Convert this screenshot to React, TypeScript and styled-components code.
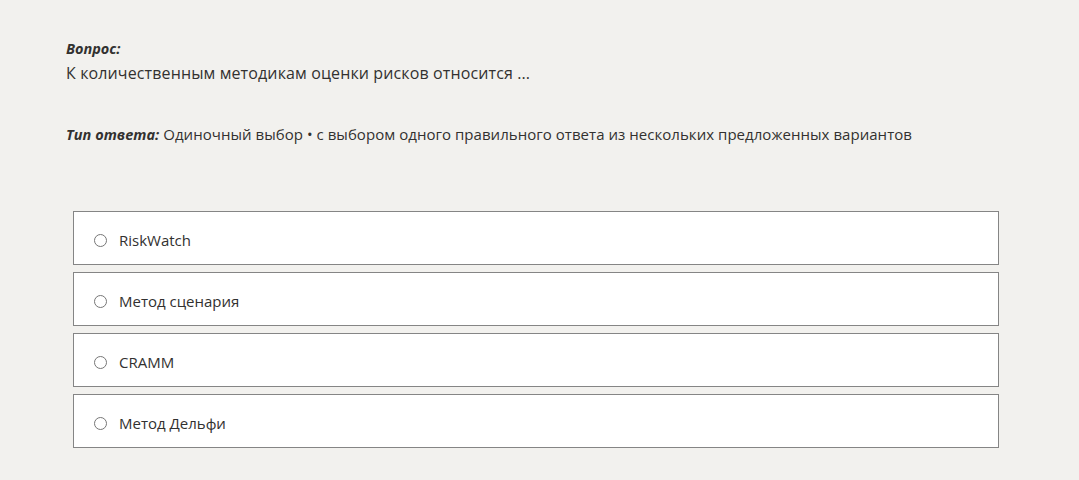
import React from 'react';
import styled, { createGlobalStyle } from 'styled-components';

const GlobalStyle = createGlobalStyle`
  html, body {
    margin: 0;
    padding: 0;
    background-color: #f2f1ee;
  }
  body {
    font-family: 'Open Sans', 'Noto Sans', sans-serif;
    color: #323130;
  }
`;

const options = ['RiskWatch', 'Метод сценария', 'CRAMM', 'Метод Дельфи'];

const App: React.FC = () => {
  return (
    <Page>
      <GlobalStyle />
      <Label>Вопрос:</Label>
      <Question>К количественным методикам оценки рисков относится ...</Question>
      <AnswerType>
        <Label as="span">Тип ответа:</Label> Одиночный выбор • с выбором одного правильного ответа из нескольких предложенных вариантов
      </AnswerType>
      <Options>
        {options.map((opt) => (
          <Option key={opt}>
            <Radio />
            <OptionText>{opt}</OptionText>
          </Option>
        ))}
      </Options>
    </Page>
  );
};

const Page = styled.div`
  width: 1079px;
  min-height: 480px;
  box-sizing: border-box;
  padding: 39px 0 0 66px;
`;

const Label = styled.div`
  font-size: 14.5px;
  font-weight: 700;
  font-style: italic;
  line-height: 20px;
`;

const Question = styled.div`
  font-size: 16px;
  letter-spacing: 0.12px;
  line-height: 24px;
  margin-top: 2px;
`;

const AnswerType = styled.div`
  font-size: 15px;
  letter-spacing: 0.04px;
  line-height: 24px;
  margin-top: 37px;
`;

const Options = styled.div`
  display: flex;
  flex-direction: column;
  gap: 7px;
  margin-top: 65px;
  margin-left: 7px;
  width: 926px;
`;

const Option = styled.div`
  display: flex;
  align-items: center;
  height: 54px;
  box-sizing: border-box;
  background: #ffffff;
  border: 1px solid #858585;
  padding: 4px 0 0 20px;
`;

const Radio = styled.span`
  width: 11px;
  height: 11px;
  border: 1px solid #767676;
  border-radius: 50%;
  margin-right: 12px;
`;

const OptionText = styled.span`
  font-size: 15px;
`;

export default App;
